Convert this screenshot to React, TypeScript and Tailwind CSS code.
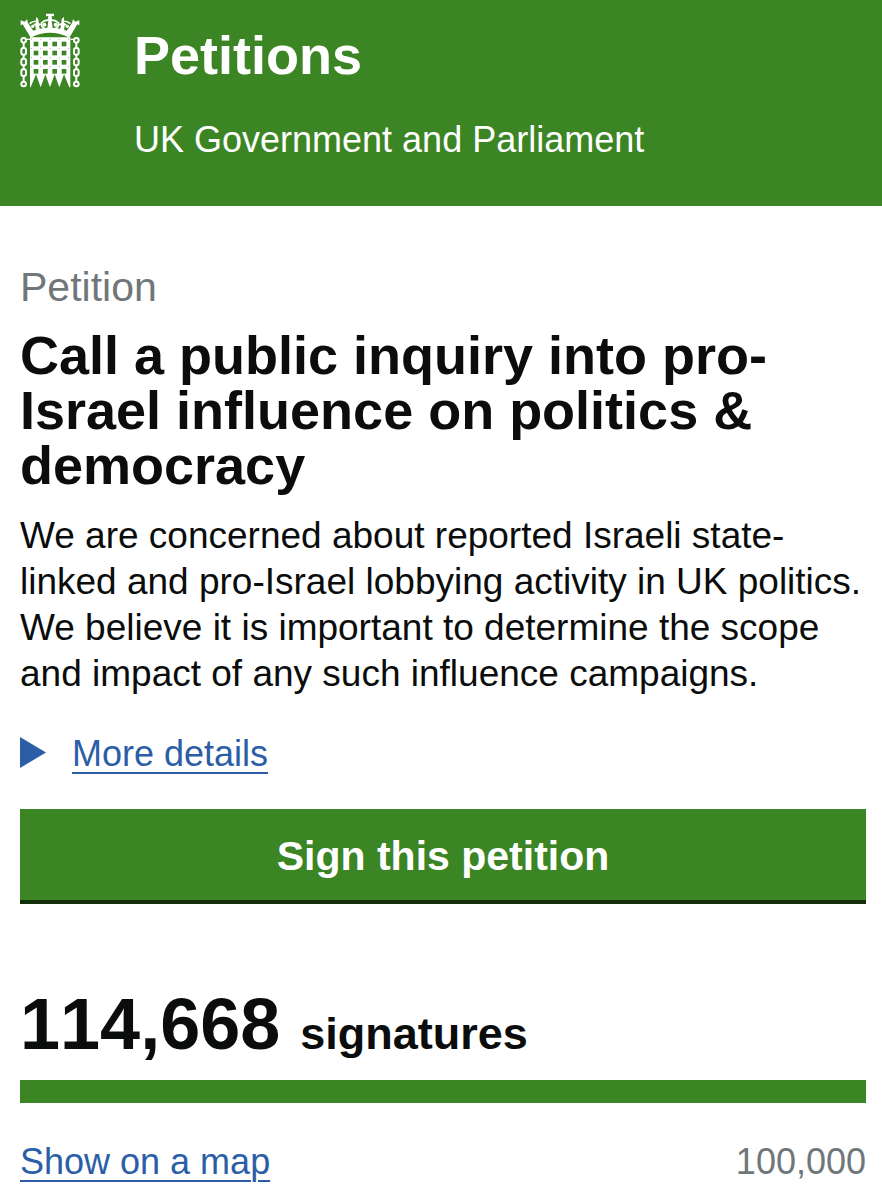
const columns = [76, 104, 132, 160]
const chainLinks = [139, 171, 203]

function PortcullisLogo() {
  return (
    <svg viewBox="28 24 180 225" className="h-[75px] w-[60px]" role="img" aria-label="UK Parliament">
      {/* Crown */}
      <g fill="#fff">
        <path d="M60 98 L36 58 L30 61 L30 46 L42 50 L49 43 L52 54 L60 66 L68 77 Q90 68 118 68 Q146 68 168 77 L176 66 L184 54 L187 43 L194 50 L206 46 L206 61 L200 58 L176 98 Q148 83 118 83 Q88 83 60 98 Z" />
        <path d="M106 26 H130 V34 L123 33 L124 44 H112 L113 33 L106 34 Z" />
        <path d="M114 42 h8 l4 28 h-16 Z" />
        <path d="M76 36 L83 42 L84 53 L92 59 L85 62 L88 74 L76 77 L74 62 L67 59 L76 53 Z" />
        <path d="M160 36 L153 42 L152 53 L144 59 L151 62 L148 74 L160 77 L162 62 L169 59 L160 53 Z" />
        <circle cx="101" cy="59" r="6" />
        <circle cx="135" cy="59" r="6" />
        <circle cx="66" cy="64" r="5" />
        <circle cx="170" cy="64" r="5" />
      </g>
      <g fill="none" stroke="#fff" strokeWidth="5">
        <path d="M116 46 Q103 43 92 54 Q91 67 103 71" />
        <path d="M120 46 Q133 43 144 54 Q145 67 133 71" />
        <path d="M80 49 Q66 47 57 56" />
        <path d="M156 49 Q170 47 179 56" />
      </g>

      {/* Portcullis */}
      <path
        fill="#fff"
        d="M58 97 H179 V247 H176 L160 208 L146 247 L132 208 L118 247 L104 208 L90 247 L76 208 L60 247 H58 Z"
      />
      <g fill="#3b8524">
        {[117, 144, 172, 199].map((y) =>
          columns.map((x) => <rect key={`${x}-${y}`} x={x - 7} y={y - 7} width="14" height="14" />)
        )}
      </g>
      <g fill="#9dc291">
        {[103, 130, 158, 185].map((y) =>
          [62, 90, 118, 146, 174].map((x) => <circle key={`${x}-${y}`} cx={x} cy={y} r="2" />)
        )}
      </g>

      {/* Chains */}
      {[39, 197].map((x) => (
        <g key={x} fill="none" stroke="#fff" strokeWidth="6">
          <circle cx={x} cy="106" r="7" />
          {chainLinks.map((y) => (
            <rect key={y} x={x - 7} y={y - 10} width="14" height="20" rx="6" />
          ))}
          <circle cx={x} cy="237" r="7" />
          <path d={`M${x} 113 v16 M${x} 149 v12 M${x} 181 v12 M${x} 213 v17`} />
        </g>
      ))}
      <path stroke="#fff" strokeWidth="4" d="M46 103 H58 M179 103 H190" />
    </svg>
  )
}

function Header() {
  return (
    <header className="flex gap-[54px] bg-[#3b8524] px-5 pt-[13px] pb-[43px] text-white">
      <a href="#" className="shrink-0">
        <PortcullisLogo />
      </a>
      <div className="pt-3">
        <a href="#" className="block text-[54px] leading-[60px] font-bold">Petitions</a>
        <p className="mt-8 text-[36px] leading-[46px]">UK Government and Parliament</p>
      </div>
    </header>
  )
}

export default function App() {
  return (
    <div className="min-h-screen bg-white font-['Liberation_Sans',Arial,sans-serif] text-[#0b0c0c]">
      <Header />
      <main className="pt-14 pr-4 pb-4 pl-5">
        <h1 className="font-bold">
          <span className="block text-[41px] leading-[50px] font-normal text-[#6f777b]">Petition</span>
          <span className="mt-4 block text-[54px] leading-[55px]">
            Call a public inquiry into pro-Israel influence on politics &amp; democracy
          </span>
        </h1>
        <p className="mt-5 text-[37px] leading-[46px]">
          We are concerned about reported Israeli state-linked and pro-Israel lobbying activity in UK politics. We
          believe it is important to determine the scope and impact of any such influence campaigns.
        </p>

        <details className="mt-[34px]">
          <summary className="flex cursor-pointer list-none items-center gap-[26px] text-[36px] leading-[46px] text-[#2b5ea7]">
            <svg viewBox="0 0 26 31" className="mb-1 h-[31px] w-[26px]" fill="currentColor" aria-hidden="true">
              <path d="M0 0 L26 15.5 L0 31 Z" />
            </svg>
            <span className="underline decoration-2 underline-offset-[6px]">More details</span>
          </summary>
        </details>

        <button
          type="button"
          className="mt-8 block w-full border-b-4 border-[#14300b] bg-[#3b8524] pt-6 pb-[21px] text-[41px] leading-[46px] font-bold text-white"
        >
          Sign this petition
        </button>

        {/* Signature count */}
        <section className="mt-20">
          <p className="flex items-baseline gap-5 font-bold">
            <span className="text-[72px] leading-[80px] [font-kerning:none]">114,668</span>
            <span className="text-[45px] leading-[46px]">signatures</span>
          </p>
          <div
            role="progressbar"
            aria-label="Signatures"
            aria-valuenow={100000}
            aria-valuemax={100000}
            className="mt-4 h-[23px] bg-[#3b8524]"
          />
          <div className="mt-9 flex justify-between text-[36px] leading-[46px]">
            <a href="#" className="text-[#2b5ea7] underline decoration-2 underline-offset-[6px]">Show on a map</a>
            <span className="text-[#6f777b]">100,000</span>
          </div>
        </section>
      </main>
    </div>
  )
}
